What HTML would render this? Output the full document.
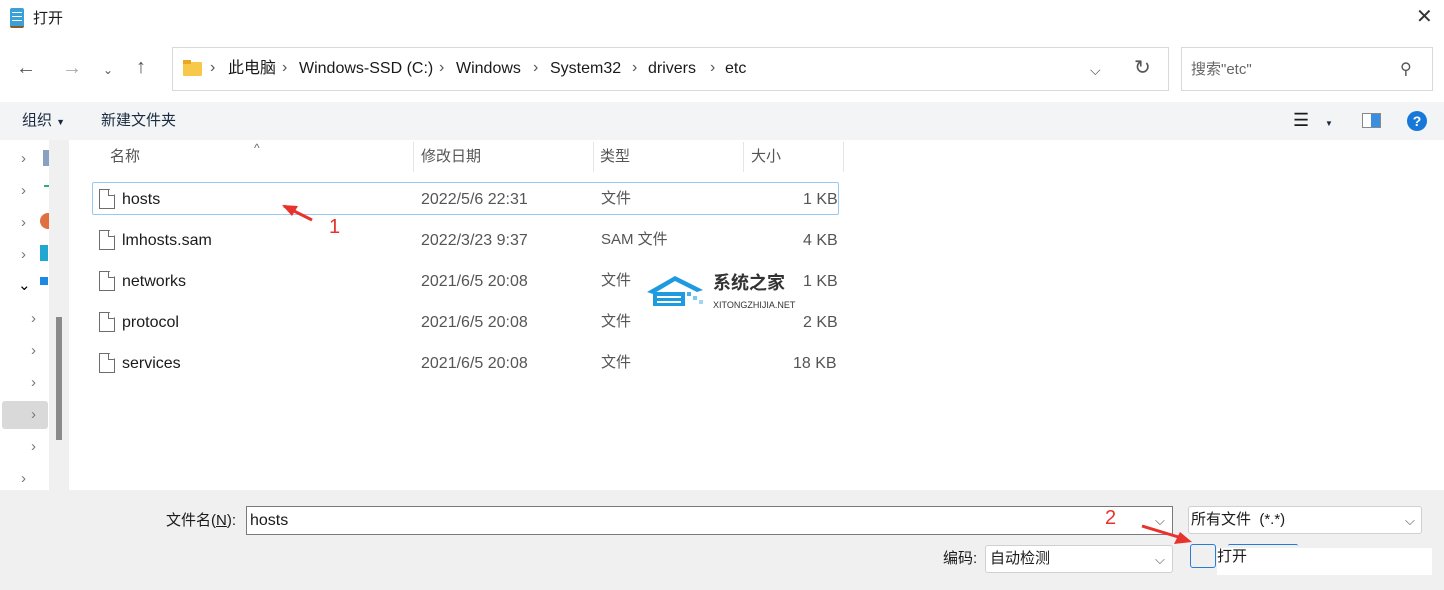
<!DOCTYPE html>
<html><head><meta charset="utf-8"><style>
*{margin:0;padding:0;box-sizing:border-box}
body{width:1444px;height:590px;background:#fff;font-family:"Liberation Sans","Noto Sans CJK SC",sans-serif;font-size:16px;line-height:20px;color:#1a1a1a;position:relative;overflow:hidden}
.a{position:absolute;white-space:nowrap}
.fi{position:absolute;width:16px;height:20px;border:1.3px solid #6d6d6d;background:#fff;clip-path:polygon(0 0,65% 0,100% 30%,100% 100%,0 100%)}
.fi:after{content:"";position:absolute;right:-1px;top:-1px;width:6px;height:6px;border-left:1.3px solid #6d6d6d;border-bottom:1.3px solid #6d6d6d}
.row{position:absolute;left:92px;width:747px;height:33px}
.chev{position:absolute;color:#777;font-size:15px}
.gr{color:#555}
.bc{position:absolute;top:59px;font-size:16px}
.sep{position:absolute;top:58px;font-size:16px;color:#555}
</style></head><body>
<!-- title -->
<div class="a" style="left:10px;top:8px;width:14px;height:20px;background:#3aa0d8;border-radius:2px;border-bottom:2px solid #8a5a2a"></div>
<div class="a" style="left:12px;top:12px;width:10px;height:1px;background:#fff;box-shadow:0 4px #fff,0 8px #fff"></div>
<div class="a" style="left:33px;top:9px;font-size:15px">打开</div>
<div class="a" style="left:1416px;top:7px;font-size:20px;color:#333">✕</div>
<!-- nav -->
<div class="a" style="left:16px;top:58px;font-size:20px;color:#555">←</div>
<div class="a" style="left:62px;top:58px;font-size:20px;color:#aaa">→</div>
<div class="a" style="left:103px;top:60px;font-size:12px;color:#555">⌄</div>
<div class="a" style="left:136px;top:57px;font-size:20px;color:#555">↑</div>
<div class="a" style="left:172px;top:47px;width:997px;height:44px;border:1px solid #d9d9d9"></div>
<div class="a" style="left:183px;top:62px;width:19px;height:14px;background:#f8c84a;border-radius:1px"></div>
<div class="a" style="left:183px;top:60px;width:8px;height:4px;background:#e8a826"></div>
<div class="sep" style="left:210px">›</div>
<div class="bc" style="left:228px">此电脑</div>
<div class="sep" style="left:282px">›</div>
<div class="bc" style="left:299px">Windows-SSD (C:)</div>
<div class="sep" style="left:439px">›</div>
<div class="bc" style="left:456px">Windows</div>
<div class="sep" style="left:533px">›</div>
<div class="bc" style="left:550px">System32</div>
<div class="sep" style="left:632px">›</div>
<div class="bc" style="left:648px">drivers</div>
<div class="sep" style="left:710px">›</div>
<div class="bc" style="left:725px">etc</div>
<div class="a" style="left:1090px;top:60px;font-size:14px;color:#555">⌵</div>
<div class="a" style="left:1134px;top:58px;font-size:20px;color:#555">↻</div>
<div class="a" style="left:1181px;top:47px;width:252px;height:44px;border:1px solid #d9d9d9"></div>
<div class="a" style="left:1191px;top:60px;color:#666;font-size:15px">搜索"etc"</div>
<div class="a" style="left:1400px;top:60px;font-size:16px;color:#555">⚲</div>
<!-- toolbar -->
<div class="a" style="left:0;top:102px;width:1444px;height:38px;background:#f3f4f6"></div>
<div class="a" style="left:22px;top:111px;color:#1a2a40;font-size:15px">组织 <span style="font-size:9px">▼</span></div>
<div class="a" style="left:101px;top:111px;color:#1a2a40;font-size:15px">新建文件夹</div>
<div class="a" style="left:1293px;top:110px;font-size:18px">☰</div>
<div class="a" style="left:1325px;top:114px;font-size:8px;color:#1a2a40">▼</div>
<div class="a" style="left:1362px;top:113px;width:19px;height:15px;border:1px solid #888;background:#fff"></div>
<div class="a" style="left:1371px;top:114px;width:9px;height:13px;background:#3a8ee0"></div>
<div class="a" style="left:1407px;top:111px;width:20px;height:20px;border-radius:50%;background:#1878d8;color:#fff;font-size:14px;text-align:center;line-height:20px;font-weight:bold">?</div>
<!-- left pane -->
<div class="a" style="left:49px;top:140px;width:20px;height:350px;background:#f0f0f0"></div>
<div class="a" style="left:56px;top:317px;width:6px;height:123px;background:#8a8a8a"></div>
<div class="a" style="left:2px;top:401px;width:46px;height:28px;background:#d9d9d9;border-radius:3px"></div>
<div class="chev" style="left:21px;top:149px">›</div>
<div class="chev" style="left:21px;top:181px">›</div>
<div class="chev" style="left:21px;top:213px">›</div>
<div class="chev" style="left:21px;top:245px">›</div>
<div class="chev" style="left:18px;top:276px;color:#000">⌄</div>
<div class="chev" style="left:31px;top:309px">›</div>
<div class="chev" style="left:31px;top:341px">›</div>
<div class="chev" style="left:31px;top:373px">›</div>
<div class="chev" style="left:31px;top:405px">›</div>
<div class="chev" style="left:31px;top:437px">›</div>
<div class="chev" style="left:21px;top:469px">›</div>
<div class="a" style="left:43px;top:150px;width:6px;height:16px;background:#8aa0c0"></div>
<div class="a" style="left:44px;top:185px;width:5px;height:2px;background:#2ab070"></div>
<div class="a" style="left:40px;top:213px;width:9px;height:16px;background:#e07040;border-radius:8px 0 0 8px"></div>
<div class="a" style="left:40px;top:245px;width:8px;height:16px;background:#20a8d0"></div>
<div class="a" style="left:40px;top:277px;width:8px;height:8px;background:#1e88e5"></div>
<!-- headers -->
<div class="a" style="left:254px;top:138px;font-size:12px;color:#666">^</div>
<div class="a gr" style="left:110px;top:147px;font-size:15px">名称</div>
<div class="a gr" style="left:421px;top:147px;font-size:15px">修改日期</div>
<div class="a gr" style="left:600px;top:147px;font-size:15px">类型</div>
<div class="a gr" style="left:751px;top:147px;font-size:15px">大小</div>
<div class="a" style="left:413px;top:142px;width:1px;height:30px;background:#e5e5e5"></div>
<div class="a" style="left:593px;top:142px;width:1px;height:30px;background:#e5e5e5"></div>
<div class="a" style="left:743px;top:142px;width:1px;height:30px;background:#e5e5e5"></div>
<div class="a" style="left:843px;top:142px;width:1px;height:30px;background:#e5e5e5"></div>
<!-- rows -->
<div class="row" style="top:182px;border:1px solid #99c9ef;border-radius:2px"></div>
<div class="fi" style="left:99px;top:189px"></div><div class="a" style="left:122px;top:190px">hosts</div><div class="a gr" style="left:421px;top:190px">2022/5/6 22:31</div><div class="a gr" style="left:601px;top:189px;font-size:15px">文件</div><div class="a gr" style="left:803px;top:190px">1 KB</div>
<div class="fi" style="left:99px;top:230px"></div><div class="a" style="left:122px;top:231px">lmhosts.sam</div><div class="a gr" style="left:421px;top:231px">2022/3/23 9:37</div><div class="a gr" style="left:601px;top:230px;font-size:15px">SAM 文件</div><div class="a gr" style="left:803px;top:231px">4 KB</div>
<div class="fi" style="left:99px;top:271px"></div><div class="a" style="left:122px;top:272px">networks</div><div class="a gr" style="left:421px;top:272px">2021/6/5 20:08</div><div class="a gr" style="left:601px;top:271px;font-size:15px">文件</div><div class="a gr" style="left:803px;top:272px">1 KB</div>
<div class="fi" style="left:99px;top:312px"></div><div class="a" style="left:122px;top:313px">protocol</div><div class="a gr" style="left:421px;top:313px">2021/6/5 20:08</div><div class="a gr" style="left:601px;top:312px;font-size:15px">文件</div><div class="a gr" style="left:803px;top:313px">2 KB</div>
<div class="fi" style="left:99px;top:353px"></div><div class="a" style="left:122px;top:354px">services</div><div class="a gr" style="left:421px;top:354px">2021/6/5 20:08</div><div class="a gr" style="left:601px;top:353px;font-size:15px">文件</div><div class="a gr" style="left:793px;top:354px">18 KB</div>
<!-- watermark -->
<svg class="a" style="left:645px;top:272px" width="70" height="36"><path d="M2 20 L30 4 L58 18 L52 20 L30 9 L8 22Z" fill="#1e9ae0"/><rect x="8" y="20" width="32" height="14" fill="#1e9ae0"/><rect x="12" y="24" width="24" height="2" fill="#fff"/><rect x="12" y="29" width="24" height="2" fill="#fff"/><rect x="42" y="20" width="4" height="4" fill="#4ab0ea"/><rect x="48" y="24" width="4" height="4" fill="#7cc6f0"/><rect x="54" y="28" width="4" height="4" fill="#a0d6f4"/></svg>
<div class="a" style="left:713px;top:273px;font-size:18px;font-weight:bold;color:#333">系统之家</div>
<div class="a" style="left:713px;top:295px;font-size:9px;color:#333">XITONGZHIJIA.NET</div>
<!-- arrow 1 -->
<svg class="a" style="left:280px;top:200px" width="80" height="40"><path d="M4 6 L32 20" stroke="#e8322c" stroke-width="3"/><path d="M2 5 L18 6 L12 16Z" fill="#e8322c"/></svg>
<div class="a" style="left:329px;top:217px;font-size:20px;color:#e8322c">1</div>
<!-- bottom -->
<div class="a" style="left:0;top:490px;width:1444px;height:100px;background:#f0f0f0"></div>
<div class="a" style="left:166px;top:511px;font-size:15px">文件名(<u>N</u>):</div>
<div class="a" style="left:246px;top:506px;width:927px;height:29px;background:#fff;border:1px solid #7a7a7a"></div>
<div class="a" style="left:250px;top:511px">hosts</div>
<div class="a" style="left:1155px;top:511px;font-size:13px;color:#555">⌵</div>
<div class="a" style="left:1105px;top:508px;font-size:20px;color:#e8322c">2</div>
<div class="a" style="left:1188px;top:506px;width:234px;height:28px;background:#fff;border:1px solid #d0d0d0;border-radius:3px"></div>
<div class="a" style="left:1191px;top:510px;font-size:15px">所有文件&nbsp; (*.*)</div>
<div class="a" style="left:1405px;top:511px;font-size:13px;color:#555">⌵</div>
<div class="a" style="left:943px;top:549px;font-size:15px">编码:</div>
<div class="a" style="left:985px;top:545px;width:188px;height:28px;background:#fff;border:1px solid #d0d0d0;border-radius:3px"></div>
<div class="a" style="left:990px;top:549px;font-size:15px">自动检测</div>
<div class="a" style="left:1155px;top:550px;font-size:13px;color:#555">⌵</div>
<div class="a" style="left:1190px;top:544px;width:26px;height:24px;border:1px solid #2a7ad8;border-radius:3px"></div>
<div class="a" style="left:1228px;top:544px;width:70px;height:4px;border-top:1px solid #2a7ad8;border-radius:3px"></div>
<div class="a" style="left:1217px;top:548px;width:215px;height:27px;background:#fff"></div>
<div class="a" style="left:1217px;top:547px;font-size:15px">打开</div>
<svg class="a" style="left:1140px;top:522px" width="60" height="30"><path d="M2 4 L45 17" stroke="#e8322c" stroke-width="3"/><path d="M52 20 L34 22 L40 10Z" fill="#e8322c"/></svg>
</body></html>
